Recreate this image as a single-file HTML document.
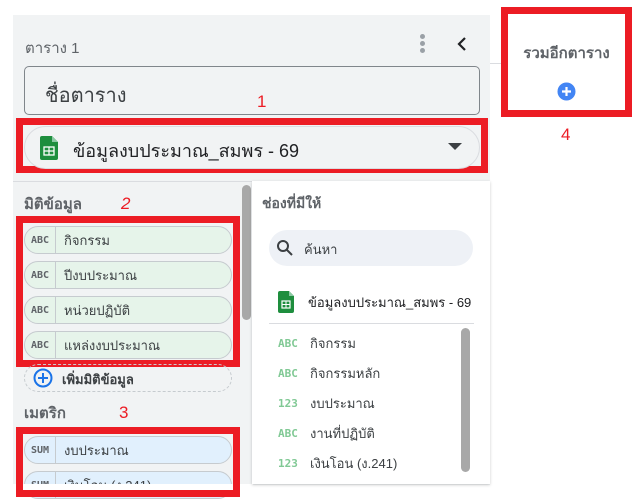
<!DOCTYPE html>
<html><head><meta charset="utf-8"><style>
*{box-sizing:border-box;margin:0;padding:0}
body{width:637px;height:490px;background:#fff;position:relative;overflow:hidden;font-family:"Liberation Sans","Noto Sans CJK SC",sans-serif;color:#3c4043}
.abs{position:absolute}
.red{position:absolute;border:7px solid #ec1c24}
.num{position:absolute;color:#ec1c24;font-size:17px}
.chip{position:absolute;left:24px;width:208px;height:28px;border:1px solid #c6cbcf;border-radius:14px;background:#e6f4ea;font-size:13px;display:flex;align-items:center}
.chip .t{width:31px;height:100%;border-right:1px solid #c6cbcf;font-size:10px;font-weight:bold;color:#5f6368;display:flex;align-items:center;justify-content:center;font-family:"DejaVu Sans Mono",monospace}
.chip .l{padding-left:8px}
.sum{background:#e1f0fd}
.it{position:absolute;left:278px;font-size:13px;display:flex;align-items:center}
.it b{width:32px;font-size:11px;color:#81c995;font-family:"DejaVu Sans Mono",monospace;font-weight:bold}
</style></head><body>
<div class="abs" style="left:13px;top:15px;width:477px;height:470px;background:#f1f3f4"></div>
<div class="abs" style="left:490px;top:63px;width:12px;height:1px;background:#dadce0"></div>
<div class="abs" style="left:25px;top:36px;font-size:15px;color:#5f6368">ตาราง 1</div>
<div class="abs" style="left:420px;top:34px;width:5px"><div style="width:5px;height:5px;border-radius:50%;background:#9aa0a6;margin-bottom:2px"></div><div style="width:5px;height:5px;border-radius:50%;background:#9aa0a6;margin-bottom:2px"></div><div style="width:5px;height:5px;border-radius:50%;background:#9aa0a6"></div></div>
<svg class="abs" style="left:455px;top:36px" width="14" height="16"><path d="M10 2 L4 8 L10 14" stroke="#202124" stroke-width="2.2" fill="none"/></svg>
<div class="abs" style="left:24px;top:66px;width:456px;height:49px;border:1px solid #80868b;border-radius:5px"></div>
<div class="abs" style="left:45px;top:79px;font-size:20px;color:#3c4043">ชื่อตาราง</div>
<div class="num" style="left:257px;top:92px">1</div>
<div class="red" style="left:16px;top:118px;width:472px;height:55px"></div>
<div class="abs" style="left:24px;top:126px;width:456px;height:43px;border:1px solid #dadce0;border-radius:22px;background:#f1f3f4"></div>
<svg class="abs" style="left:40px;top:136px" width="18" height="24"><path d="M0 2 Q0 0 2 0 L12 0 L18 6 L18 22 Q18 24 16 24 L2 24 Q0 24 0 22Z" fill="#1e8e3e"/><path d="M12 0 L18 6 L12 6Z" fill="#8bc9a3"/><rect x="4" y="11" width="10" height="8" fill="none" stroke="#fff" stroke-width="1.3"/><path d="M4 15 H14 M9 11 V19" stroke="#fff" stroke-width="1.2"/></svg>
<div class="abs" style="left:73px;top:136px;font-size:18px;color:#202124">ข้อมูลงบประมาณ_สมพร - 69</div>
<svg class="abs" style="left:448px;top:143px" width="14" height="8"><path d="M0 0 H14 L7 7Z" fill="#3c4043"/></svg>
<div class="abs" style="left:13px;top:181px;width:477px;height:1px;background:#dadce0"></div>
<div class="abs" style="left:242px;top:185px;width:9px;height:135px;border-radius:5px;background:#a8a8a8"></div>
<div class="abs" style="left:24px;top:192px;font-size:15px;font-weight:bold;color:#5f6368">มิติข้อมูล</div>
<div class="num" style="left:121px;top:194px;font-style:italic">2</div>
<div class="red" style="left:16px;top:216px;width:224px;height:151px"></div>
<div class="chip" style="top:226px"><div class="t">ABC</div><div class="l">กิจกรรม</div></div>
<div class="chip" style="top:261px"><div class="t">ABC</div><div class="l">ปีงบประมาณ</div></div>
<div class="chip" style="top:296px"><div class="t">ABC</div><div class="l">หน่วยปฏิบัติ</div></div>
<div class="chip" style="top:331px"><div class="t">ABC</div><div class="l">แหล่งงบประมาณ</div></div>
<div class="abs" style="left:24px;top:364px;width:208px;height:28px;border:1px dashed #c6cbcf;border-radius:14px"></div>
<svg class="abs" style="left:32px;top:367px" width="22" height="22"><circle cx="11" cy="11" r="8.5" stroke="#1a73e8" stroke-width="2" fill="none"/><path d="M11 6 V16 M6 11 H16" stroke="#1a73e8" stroke-width="2"/></svg>
<div class="abs" style="left:62px;top:369px;font-size:13px;font-weight:bold;color:#3c4043">เพิ่มมิติข้อมูล</div>
<div class="abs" style="left:24px;top:401px;font-size:15px;font-weight:bold;color:#5f6368">เมตริก</div>
<div class="num" style="left:119px;top:403px">3</div>
<div class="chip sum" style="top:436px"><div class="t">SUM</div><div class="l">งบประมาณ</div></div>
<div class="chip sum" style="top:471px"><div class="t">SUM</div><div class="l">เงินโอน (ง.241)</div></div>
<div class="abs" style="left:13px;top:484px;width:240px;height:6px;background:#fff"></div>
<div class="red" style="left:16px;top:427px;width:224px;height:70px"></div>
<div class="abs" style="left:252px;top:181px;width:238px;height:303px;background:#fff;box-shadow:0 1px 3px rgba(0,0,0,.2)"></div>
<div class="abs" style="left:262px;top:193px;font-size:14px;font-weight:bold;color:#5f6368">ช่องที่มีให้</div>
<div class="abs" style="left:269px;top:230px;width:204px;height:36px;border-radius:18px;background:#eef1f6"></div>
<svg class="abs" style="left:276px;top:239px" width="18" height="18"><circle cx="7" cy="7" r="5" stroke="#3c4043" stroke-width="2" fill="none"/><path d="M11 11 L16 16" stroke="#3c4043" stroke-width="2"/></svg>
<div class="abs" style="left:304px;top:239px;font-size:13px;color:#3c4043">ค้นหา</div>
<svg class="abs" style="left:278px;top:291px" width="16" height="22"><path d="M0 2 Q0 0 2 0 L11 0 L16 5 L16 20 Q16 22 14 22 L2 22 Q0 22 0 20Z" fill="#1e8e3e"/><path d="M11 0 L16 5 L11 5Z" fill="#8bc9a3"/><rect x="4" y="10" width="8" height="7" fill="none" stroke="#fff" stroke-width="1.2"/><path d="M4 13.5 H12 M8 10 V17" stroke="#fff" stroke-width="1"/></svg>
<div class="abs" style="left:308px;top:292px;font-size:13px;color:#202124">ข้อมูลงบประมาณ_สมพร - 69</div>
<div class="abs" style="left:269px;top:323px;width:205px;height:1px;background:#dadce0"></div>
<div class="abs" style="left:461px;top:328px;width:9px;height:144px;border-radius:5px;background:#a8a8a8"></div>
<div class="it" style="top:333px"><b>ABC</b>กิจกรรม</div>
<div class="it" style="top:363px"><b>ABC</b>กิจกรรมหลัก</div>
<div class="it" style="top:393px"><b>123</b>งบประมาณ</div>
<div class="it" style="top:423px"><b>ABC</b>งานที่ปฏิบัติ</div>
<div class="it" style="top:453px"><b>123</b>เงินโอน (ง.241)</div>
<div class="red" style="left:501px;top:7px;width:131px;height:110px"></div>
<div class="abs" style="left:509px;top:16px;width:115px;height:93px;background:#fff;border-radius:4px"></div>
<div class="abs" style="left:509px;top:41px;width:115px;text-align:center;font-size:15px;font-weight:bold;color:#5f6368">รวมอีกตาราง</div>
<svg class="abs" style="left:557px;top:82px" width="19" height="19"><circle cx="9.5" cy="9.5" r="9" fill="#4285f4"/><path d="M9.5 5 V14 M5 9.5 H14" stroke="#fff" stroke-width="2.2"/></svg>
<div class="num" style="left:561px;top:125px">4</div>
</body></html>
